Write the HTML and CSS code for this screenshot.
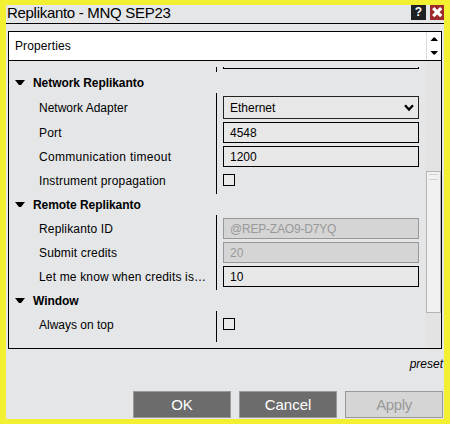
FILE: index.html
```html
<!DOCTYPE html>
<html lang="en">
<head>
<meta charset="utf-8">
<title>Replikanto - MNQ SEP23</title>
<link rel="stylesheet" href="styles.css">
</head>
<body>
<main class="window">
  <header class="titlebar">
    <h1 class="title">Replikanto - MNQ SEP23</h1>
    <span class="help">?</span>
    <span class="close"><svg width="14" height="14" viewBox="0 0 14 14"><path d="M3.2 3.2l8 8M11.2 3.2l-8 8" stroke="#fff" stroke-width="3.2"/></svg></span>
  </header>
  <section class="panel">
    <div class="panel-head">
      <span class="panel-title">Properties</span>
      <span class="spinner">
        <svg width="14" height="28" viewBox="0 0 14 28"><path d="M3.5 9L6.5 5.5H8L11 9zM3.5 19H11L8 22.5H6.5z"/></svg>
      </span>
    </div>
    <div class="panel-body">
      <div class="list">
        <div class="rows clipped"><div class="stub"></div></div>
        <h2 class="group"><svg class="tri" width="10" height="6" viewBox="0 0 10 6"><path d="M0 0h10L6 5H4z"/></svg><span>Network Replikanto</span></h2>
        <div class="rows">
          <div class="row tall"><span class="label snug">Network Adapter</span><span class="cell"><span class="field select"><span>Ethernet</span><svg width="10" height="8" viewBox="0 0 10 8"><path d="M1 1.3l4 4.2 4-4.2" fill="none" stroke="#000" stroke-width="2.3"/></svg></span></span></div>
          <div class="row"><span class="label">Port</span><span class="cell"><span class="field">4548</span></span></div>
          <div class="row"><span class="label wide">Communication timeout</span><span class="cell"><span class="field">1200</span></span></div>
          <div class="row check"><span class="label">Instrument propagation</span><span class="cell"><span class="box"></span></span></div>
        </div>
        <h2 class="group"><svg class="tri" width="10" height="6" viewBox="0 0 10 6"><path d="M0 0h10L6 5H4z"/></svg><span>Remote Replikanto</span></h2>
        <div class="rows">
          <div class="row top"><span class="label">Replikanto ID</span><span class="cell"><span class="field disabled code">@REP-ZAO9-D7YQ</span></span></div>
          <div class="row"><span class="label">Submit credits</span><span class="cell"><span class="field disabled">20</span></span></div>
          <div class="row last"><span class="label">Let me know when credits is…</span><span class="cell"><span class="field">10</span></span></div>
        </div>
        <h2 class="group"><svg class="tri" width="10" height="6" viewBox="0 0 10 6"><path d="M0 0h10L6 5H4z"/></svg><span>Window</span></h2>
        <div class="rows">
          <div class="row check final"><span class="label snug">Always on top</span><span class="cell"><span class="box"></span></span></div>
        </div>
      </div>
      <div class="track"><div class="thumb"></div></div>
    </div>
  </section>
  <div class="preset"><span>preset</span></div>
  <footer class="actions">
    <span class="button">OK</span>
    <span class="button">Cancel</span>
    <span class="button off">Apply</span>
  </footer>
</main>
</body>
</html>
```
FILE: styles.css
```css
* { box-sizing: border-box; }
body {
  margin: 0;
  width: 451px;
  height: 424px;
  overflow: hidden;
  background: #fff;
  font: 12px/16px "Liberation Sans", Arial, sans-serif;
  color: #000;
}
h1, h2 { margin: 0; }
svg { display: block; }
.window {
  width: 450px;
  height: 424px;
  background: #e5e6e8;
  border: 6px solid #f3f032;
  border-top-width: 5px;
  border-bottom-width: 5px;
}
.titlebar {
  display: flex;
  height: 19px;
  padding-left: 1px;
  border-bottom: 1px solid #000;
}
.title {
  flex: 1;
  font-size: 15px;
  font-weight: 400;
  line-height: 16px;
  letter-spacing: -0.3px;
  white-space: nowrap;
}
.help {
  width: 15px;
  height: 15px;
  margin-right: 4px;
  background: #1f2022;
  color: #fff;
  font-weight: 700;
  font-size: 12px;
  line-height: 14px;
  text-align: center;
}
.close { width: 14px; height: 15px; background: #9e2a2c; }
.panel {
  width: 434px;
  height: 318px;
  margin: 7px 0 0 2px;
  border: 1px solid #000;
}
.panel-head {
  display: flex;
  height: 29px;
  background: #fff;
  border-bottom: 1px solid #000;
}
.panel-title { flex: 1; padding-left: 6px; line-height: 28px; letter-spacing: 0.12px; }
.spinner { width: 15px; border-left: 1px solid #ddd; }
.panel-body { display: flex; height: 287px; }
.list { flex: 1; padding-top: 6px; }
.rows { position: relative; }
.rows::before {
  content: "";
  position: absolute;
  left: 207px;
  top: 0;
  bottom: 0;
  width: 1px;
  background: #000;
}
.clipped { height: 5px; }
.stub {
  width: 196px;
  height: 2px;
  margin-left: 214px;
  border: 1px solid #000;
  border-top: 0;
}
.group {
  display: flex;
  align-items: center;
  height: 21px;
  padding-left: 6px;
  gap: 8px;
  font-size: 12px;
  line-height: 16px;
  letter-spacing: -0.06px;
  white-space: nowrap;
}
.row { display: flex; height: 24px; padding-top: 2px; }
.row.tall { height: 27px; padding-top: 3px; }
.row.top { height: 25px; padding-top: 3px; }
.row.last { height: 26px; }
.row.check { height: 26px; padding-top: 2px; }
.row.check.final { height: 31px; padding-top: 3px; }
.label { width: 214px; padding-left: 30px; line-height: 23px; letter-spacing: 0.16px; white-space: nowrap; }
.label.snug { letter-spacing: 0; }
.label.wide { letter-spacing: 0.3px; }
.tall .label { line-height: 25px; }
.cell { width: 196px; }
.field {
  display: flex;
  align-items: center;
  height: 21px;
  padding: 0 4px 0 6px;
  border: 1px solid #000;
  background: #e8e8e8;
}
.select { height: 23px; justify-content: space-between; border-color: #222; }
.disabled { border-color: #989898; background: #d5d5d5; color: #999; }
.code { letter-spacing: -0.2px; }
.box { display: block; width: 12px; height: 12px; margin-top: 4px; border: 1px solid #000; background: #eaeaea; }
.track { width: 15px; padding-top: 110px; background: #e4e3e4; }
.thumb {
  height: 142px;
  padding: 2px 2px 0;
  border: 1px solid #b5b5b6;
  background: #f1f1f1;
}
.thumb::before {
  content: "";
  display: block;
  height: 4px;
  border: solid #d2d2d2;
  border-width: 1px 0;
}
.preset {
  display: flex;
  justify-content: flex-end;
  height: 42px;
  padding: 7px 1px 0 0;
  font-style: italic;
}
.actions { display: flex; gap: 8px; padding-left: 127px; }
.button {
  width: 98px;
  height: 27px;
  border: 1px solid #999;
  background: #6c6c6c;
  color: #fff;
  font-size: 15px;
  line-height: 26px;
  text-align: center;
}
.off { background: #d5d5d5; color: #999; letter-spacing: -0.4px; }
```
